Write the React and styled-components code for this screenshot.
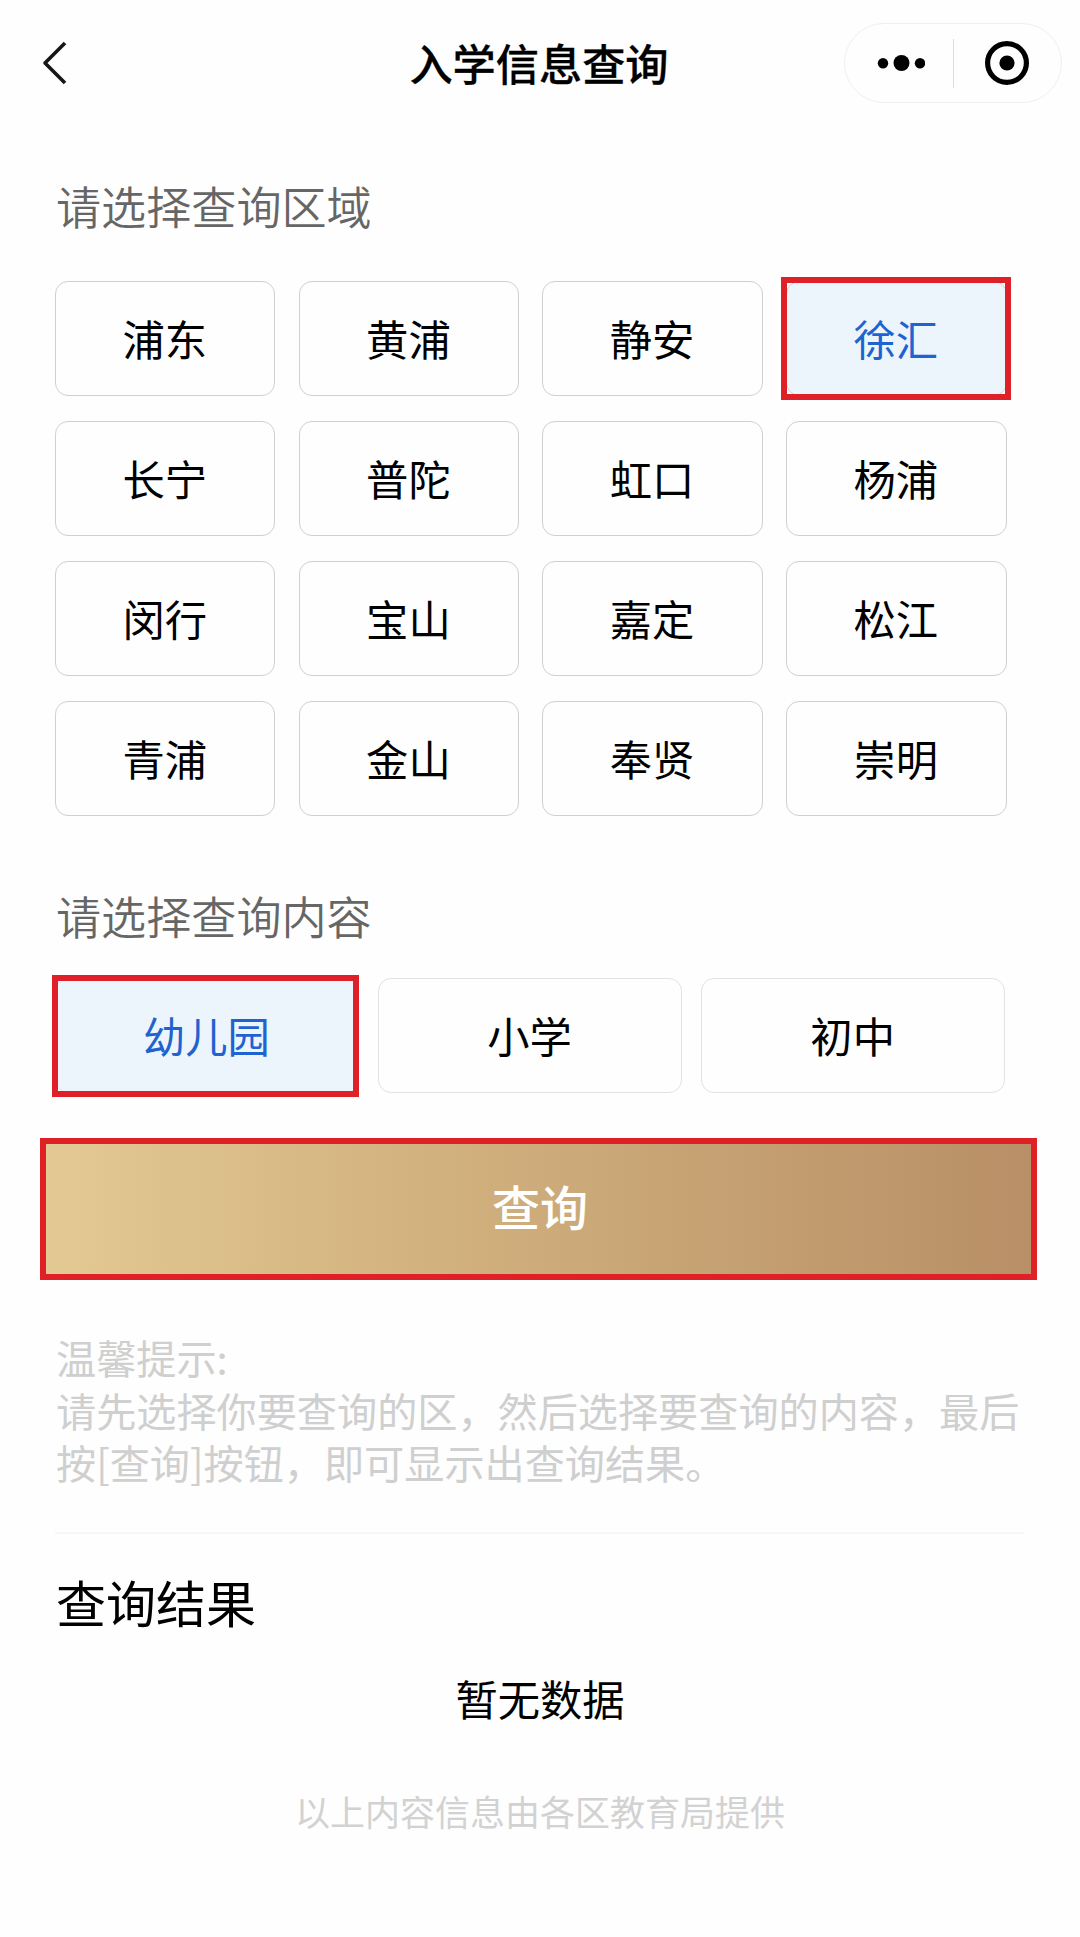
import React, { useState } from 'react';
import styled, { createGlobalStyle, css } from 'styled-components';

const GlobalStyle = createGlobalStyle`
  * { box-sizing: border-box; }
  body {
    margin: 0;
    background: #fefefe;
    color: #000;
    font-family: "Noto Sans CJK SC", sans-serif;
  }
  button { font-family: inherit; padding: 0; cursor: pointer; }
`;

const Page = styled.div`
  width: 1080px;
  height: 1937px;
  display: flex;
  flex-direction: column;
  overflow: hidden;
`;

const NavBar = styled.header`
  height: 126px;
  padding: 0 17px 0 40px;
  display: grid;
  grid-template-columns: 219px 1fr 219px;
  align-items: center;
`;

const BackButton = styled.button`
  width: 30px;
  height: 50px;
  border: 0;
  background: none;
  display: flex;
`;

const Title = styled.h1`
  margin: 0 25px 3px 0;
  font-size: 43.2px;
  line-height: 60px;
  font-weight: 500;
  -webkit-text-stroke: 0.3px #000;
  text-align: center;
  white-space: nowrap;
`;

const Capsule = styled.div`
  width: 218px;
  height: 80px;
  border: 1px solid #efefef;
  border-radius: 41px;
  display: flex;
  align-items: center;
`;

const CapsuleHalf = styled.button`
  flex: 1;
  height: 49px;
  border: 0;
  border-left: ${(p) => (p.$divided ? '1px solid #dedede' : '0')};
  background: none;
  display: flex;
  align-items: center;
  justify-content: center;
`;

const Main = styled.main`
  display: flex;
  flex-direction: column;
  padding: 0 55px;
`;

const SectionLabel = styled.h2`
  margin: ${(p) => p.$top}px 0 ${(p) => p.$bottom}px 1px;
  font-size: 45.1px;
  line-height: 60px;
  font-weight: 350;
  color: #666;
`;

const OptionGrid = styled.div`
  display: grid;
  grid-template-columns: repeat(${(p) => p.$columns}, 1fr);
  column-gap: ${(p) => p.$gap}px;
  row-gap: 25px;
  width: ${(p) => p.$width}px;
`;

const redFrame = css`
  &::after {
    content: '';
    position: absolute;
    inset: ${(p) => p.$frame};
    border: 6.5px solid #e02029;
  }
`;

const Option = styled.button`
  position: relative;
  height: 115px;
  padding: 0 1px 1px 0;
  border: 1px solid ${(p) => p.$line};
  border-radius: 13px;
  background: ${(p) => (p.$active ? '#edf5fc' : '#fefefe')};
  color: ${(p) => (p.$active ? '#1f63d0' : '#000')};
  font-size: 42.3px;
  line-height: 60px;
  font-weight: 400;
  ${(p) => p.$active && redFrame}
`;

const QueryButton = styled.button`
  height: 142px;
  margin: 45px -12px 0 -15px;
  padding: 0 0 8px 3px;
  border: 6.5px solid #e02027;
  background: linear-gradient(90deg, #e3c993 0%, #cdab7a 50%, #b88f66 100%);
  color: #fff;
  font-size: 48px;
  line-height: 70px;
  font-weight: 500;
`;

const Tips = styled.div`
  margin: 51px -15px 0 1px;
  font-size: 40.15px;
  line-height: 52.6px;
  font-weight: 400;
  color: #cfcfcf;
  p { margin: 0; white-space: nowrap; }
`;

const Divider = styled.hr`
  width: 969px;
  height: 2px;
  margin: 43px 0 0;
  border: 0;
  background: #f7f7f7;
`;

const ResultTitle = styled.h2`
  margin: 32px 0 0 1px;
  font-size: 50px;
  line-height: 70px;
  font-weight: 400;
`;

const Empty = styled.p`
  margin: 32px 0 0;
  font-size: 42.3px;
  line-height: 60px;
  text-align: center;
`;

const Source = styled.footer`
  margin-top: 58px;
  font-size: 35px;
  line-height: 50px;
  font-weight: 400;
  color: #d2d2d2;
  text-align: center;
`;

const districts = [
  '浦东', '黄浦', '静安', '徐汇',
  '长宁', '普陀', '虹口', '杨浦',
  '闵行', '宝山', '嘉定', '松江',
  '青浦', '金山', '奉贤', '崇明',
];
const stages = ['幼儿园', '小学', '初中'];

export default function App() {
  const [district, setDistrict] = useState('徐汇');
  const [stage, setStage] = useState('幼儿园');

  return (
    <>
      <GlobalStyle />
      <Page>
        <NavBar>
          <BackButton aria-label="返回">
            <svg width="30" height="50" viewBox="0 0 30 50" fill="none">
              <path d="M25 5 5 25l20 20" stroke="#161616" strokeWidth="3.6" strokeLinejoin="round" />
            </svg>
          </BackButton>
          <Title>入学信息查询</Title>
          <Capsule>
            <CapsuleHalf aria-label="更多">
              <svg width="52" height="20" viewBox="0 0 52 20">
                <circle cx="10" cy="10.2" r="5.2" />
                <circle cx="28.5" cy="10" r="8" />
                <circle cx="47" cy="10.2" r="5.2" />
              </svg>
            </CapsuleHalf>
            <CapsuleHalf $divided aria-label="关闭">
              <svg width="46" height="46" viewBox="0 0 46 46">
                <circle cx="23" cy="23" r="19.4" fill="none" stroke="#000" strokeWidth="5.2" />
                <circle cx="23" cy="23" r="7.6" />
              </svg>
            </CapsuleHalf>
          </Capsule>
        </NavBar>
        <Main>
          <SectionLabel $top={50} $bottom={45}>请选择查询区域</SectionLabel>
          <OptionGrid $columns={4} $gap={23.3} $width={951.5}>
            {districts.map((name) => (
              <Option
                key={name}
                $line="#d0d0d0"
                $frame="-5px -5px -5px -6px"
                $active={name === district}
                onClick={() => setDistrict(name)}
              >
                {name}
              </Option>
            ))}
          </OptionGrid>
          <SectionLabel $top={70} $bottom={32}>请选择查询内容</SectionLabel>
          <OptionGrid $columns={3} $gap={19.5} $width={950}>
            {stages.map((name) => (
              <Option
                key={name}
                $line="#e2e2e2"
                $frame="-4px -1px -5px -4px"
                $active={name === stage}
                onClick={() => setStage(name)}
              >
                {name}
              </Option>
            ))}
          </OptionGrid>
          <QueryButton>查询</QueryButton>
          <Tips>
            <p>温馨提示:</p>
            <p>请先选择你要查询的区，然后选择要查询的内容，最后</p>
            <p>按[查询]按钮，即可显示出查询结果。</p>
          </Tips>
          <Divider />
          <ResultTitle>查询结果</ResultTitle>
          <Empty>暂无数据</Empty>
          <Source>以上内容信息由各区教育局提供</Source>
        </Main>
      </Page>
    </>
  );
}
